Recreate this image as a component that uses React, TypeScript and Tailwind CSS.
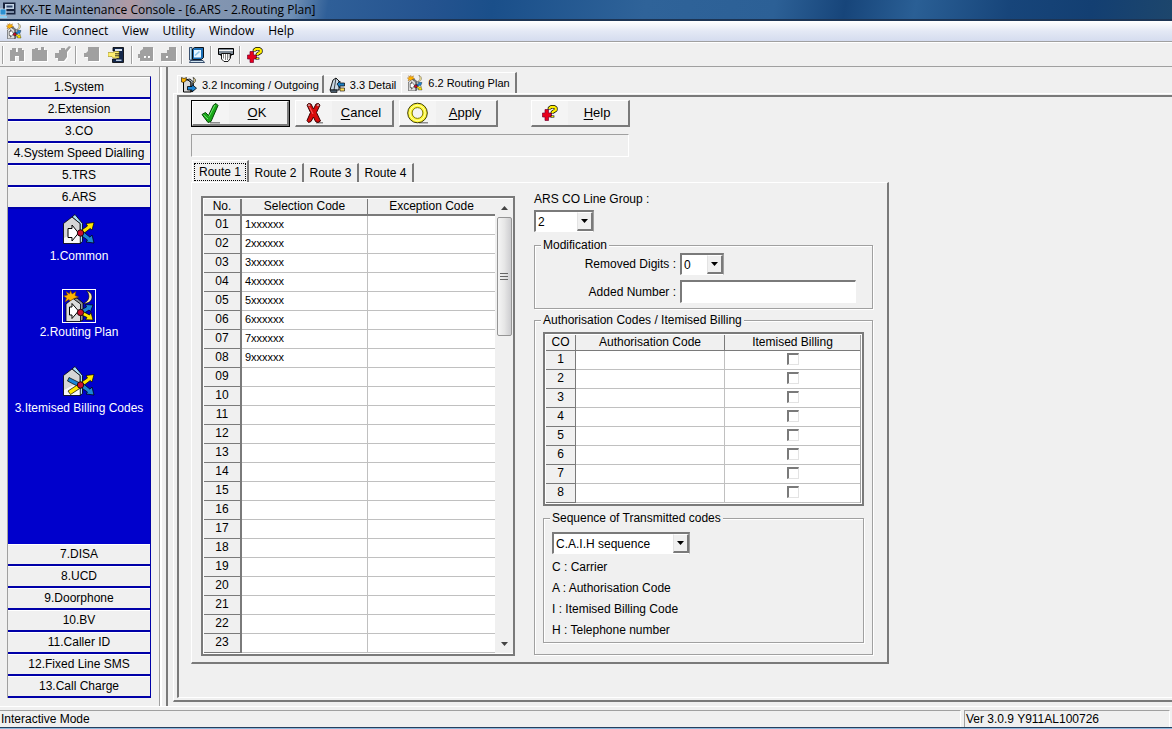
import type { ReactNode } from "react";

const topSections = ["1.System", "2.Extension", "3.CO", "4.System Speed Dialling", "5.TRS", "6.ARS"];

const bottomSections = [
  "7.DISA",
  "8.UCD",
  "9.Doorphone",
  "10.BV",
  "11.Caller ID",
  "12.Fixed Line SMS",
  "13.Call Charge",
];

const menus = ["File", "Connect", "View", "Utility", "Window", "Help"];

const routes = ["Route 1", "Route 2", "Route 3", "Route 4"];

const selectionCodes = [
  "1xxxxxx",
  "2xxxxxx",
  "3xxxxxx",
  "4xxxxxx",
  "5xxxxxx",
  "6xxxxxx",
  "7xxxxxx",
  "9xxxxxx",
];

const rowNumbers = Array.from({ length: 23 }, (_, i) => String(i + 1).padStart(2, "0"));

const coLines = [1, 2, 3, 4, 5, 6, 7, 8];

/* ---------- icons ---------- */

function HouseFront() {
  return (
    <>
      <path d="M9 3 L12 0.5 L19.5 9.5 V27.5 L17 29.5 V9.5 Z" fill="#a8dcf4" stroke="#000" strokeWidth="0.8" />
      <path d="M0.5 9.5 L9 3 L17 9.5 V29.5 H0.5 Z" fill="#d6d6d6" stroke="#000" strokeWidth="0.8" />
      <path d="M1 24 L16.6 16 V29 H1 Z" fill="#f8f8f8" />
    </>
  );
}

function WhiteArrow() {
  return <path d="M5 14.5 H9 V11 L15.5 19 L9 27 V23.5 H5 Z" fill="#fff" stroke="#000" />;
}

function SplitArrows({ up, down }: { up: string; down: string }) {
  return (
    <>
      <path d="M18 16.5 L24.5 12 L23 9.5 L31 8.5 L29 16 L27.2 14.5 L20 20 Z" fill={up} stroke="#000" strokeWidth="0.7" />
      <path d="M20 17.5 L27 23.2 L29 21 L31 29 L23 28 L24.5 26 L18 21.5 Z" fill={down} stroke="#000" strokeWidth="0.7" />
      <circle cx="17.5" cy="19" r="3.2" fill="#c8102e" stroke="#000" strokeWidth="0.8" />
    </>
  );
}

function CommonIcon() {
  return (
    <svg viewBox="0 0 32 32" className="size-8" aria-hidden="true">
      <HouseFront />
      <WhiteArrow />
      <SplitArrows up="#ffe800" down="#1c86d8" />
    </svg>
  );
}

function RoutingIcon({ className }: { className: string }) {
  return (
    <svg viewBox="0 0 32 32" className={className} aria-hidden="true">
      <path d="M10 9 L14 8 L20 13 V30 L17 31.5 V14 Z" fill="#8f9498" stroke="#000" strokeWidth="0.8" />
      <path d="M3 14 L10 8.5 L17.5 14 V31.5 H3 Z" fill="#dcdcdc" stroke="#000" strokeWidth="0.8" />
      <path d="M6.5 17 H9 V13.5 L15.5 21 L9 28.5 V25 H6.5 Z" fill="#fff" stroke="#000" />
      <path
        d="M7.5 0.5 L9.2 4 L13 1.5 L12 5.5 L15.5 7 L11 8.5 L7 11 L6 9.5 L2 12 L3.5 8 L0.5 6 L4.5 5 L3 1.5 L6.5 3.8 Z"
        fill="#ffb400"
        stroke="#7a3b00"
        strokeWidth="0.6"
      />
      <path d="M23.5 0.5 C31.5 3 31 13.5 20.5 13.5 C26.5 10.5 27.5 5.5 23.5 0.5 Z" fill="#ffeea0" stroke="#000" strokeWidth="0.6" />
      <path d="M18 20 L23.5 17 L22.5 14.5 L30 15 L27.5 21.5 L26 20 L20 24 Z" fill="#1c86d8" stroke="#000" strokeWidth="0.7" />
      <path d="M20 21.5 L26.5 25 L28 22.5 L30 30 L22.5 29.8 L24 27.5 L18 24.5 Z" fill="#ffe800" stroke="#000" strokeWidth="0.7" />
      <circle cx="17.5" cy="22.5" r="3.2" fill="#c8102e" stroke="#000" strokeWidth="0.8" />
    </svg>
  );
}

function ItemisedIcon() {
  return (
    <svg viewBox="0 0 32 32" className="size-8" aria-hidden="true">
      <HouseFront />
      <path d="M6 11.5 L18 17.5 L16 21 L4.5 15 Z" fill="#1c86d8" stroke="#000" strokeWidth="0.7" />
      <path d="M7.5 28.5 L19 21 L16.5 17.5 L5 25 Z" fill="#ffe800" stroke="#000" strokeWidth="0.7" />
      <SplitArrows up="#ffe800" down="#1c86d8" />
    </svg>
  );
}

function ConsoleIcon() {
  return (
    <svg viewBox="0 0 16 16" className="size-4" aria-hidden="true">
      <path d="M3 0.5 H15.5 V12.5 H3 Z" fill="#16223c" />
      <path d="M5 2 H14 V7 H5 Z" fill="#c4d4e6" />
      <path d="M6.5 3.5 H12.5 V5.5 H6.5 Z" fill="#33486c" />
      <path d="M6 9 H14 V11 H6 Z" fill="#7d8ea8" />
      <path d="M0 7 H6 V13 H0 Z" fill="#2b8fd0" stroke="#fff" strokeWidth="0.6" />
      <path d="M0 14 H7 V16 H0 Z" fill="#8ed0f4" />
    </svg>
  );
}

function DoorIcon() {
  return (
    <svg viewBox="0 0 16 16" className="size-4" aria-hidden="true">
      <path d="M2.5 5 L6 2.5 L10 5 V15 H2.5 Z" fill="#d8d8d8" stroke="#000" />
      <path d="M6 2.5 L9 2 L12.5 5 V13.5 L10 15 V5 Z" fill="#a4b4be" stroke="#000" strokeWidth="0.8" />
      <path d="M0.5 0.5 L3 1.5 L5.5 0.5 L5 3.5 L3 5.5 L0.5 5 Z" fill="#ffb400" stroke="#000" strokeWidth="0.6" />
      <path d="M12 0.5 C15.5 1.5 15.5 6 11 6.5 C13 5 13.5 3 12 0.5 Z" fill="#ffeea0" stroke="#000" strokeWidth="0.6" />
      <path d="M6.5 9.5 H11 V7.5 L15.5 11.2 L11 15 V13 H6.5 Z" fill="#1c86d8" stroke="#000" strokeWidth="0.8" />
    </svg>
  );
}

function DetailIcon() {
  return (
    <svg viewBox="0 0 16 16" className="size-4" aria-hidden="true">
      <path d="M1 13 L4 3 L7 1 L10 4 V13 Z" fill="#c8d8e4" stroke="#000" strokeWidth="0.9" />
      <path d="M7 1 L5 13" stroke="#000" strokeWidth="0.7" />
      <path d="M8 7 L11 4 V6 H15.5 V9 H11 V11 Z" fill="#1c7fc4" stroke="#000" strokeWidth="0.7" />
      <path d="M11 11 H15.5 V14 H11 Z" fill="#ffdc58" stroke="#000" strokeWidth="0.6" />
      <path d="M1 13 H8 V15.5 H2 Z" fill="#4a5c6c" stroke="#000" strokeWidth="0.6" />
    </svg>
  );
}

function HelpIcon({ className }: { className: string }) {
  return (
    <svg viewBox="0 0 16 16" className={className} aria-hidden="true">
      <path d="M3 4.5 H6.5 V8 H9.5 V12 H6.5 V15.5 H3 V12 H0.5 V8 H3 Z" fill="#e8001c" stroke="#7a0030" strokeWidth="0.7" />
      <g fill="none" strokeLinejoin="round">
        <path d="M7.5 4.5 V3.2 L9.2 1.8 H12.2 L13.8 3.2 V5 L10.5 7.2 V8.5 M10.5 10.5 V12.5" stroke="#000" strokeWidth="3.6" />
        <path d="M7.5 4 V3.2 L9.2 1.8 H12.2 L13.8 3.2 V5 L10.5 7.2 V8 M10.5 11 V12" stroke="#ffee00" strokeWidth="2.2" />
      </g>
    </svg>
  );
}

function DisabledIcon({ d }: { d: string }) {
  return (
    <svg viewBox="0 0 17 17" className="size-[17px]" aria-hidden="true">
      <path d={d} fill="#fff" transform="translate(1 1)" />
      <path d={d} fill="#a0a0a0" />
    </svg>
  );
}

function DisconnectIcon() {
  return (
    <svg viewBox="0 0 16 16" className="size-4" aria-hidden="true">
      <path d="M5 0.5 H15.5 V15.5 H4.5 V12 H9 V4 H5 Z" fill="#14284c" stroke="#000" strokeWidth="0.8" />
      <path d="M7 2 H14 V4 H7 Z" fill="#dfe8f2" />
      <path d="M8 12.5 H13.5 V14 H8 Z" fill="#b8c8dc" />
      <path d="M0 5.5 H5 L7 4.5 H11 V11 H5 L4 9.5 H0 Z" fill="#ffef70" stroke="#8a7a00" strokeWidth="0.5" />
      <path d="M7 6.8 H11.5 M7 8.8 H11.5" stroke="#000" strokeWidth="0.8" />
    </svg>
  );
}

function TerminalIcon() {
  return (
    <svg viewBox="0 0 16 16" className="size-4" aria-hidden="true">
      <path d="M0.5 0.5 H3 V13 H0.5 Z" fill="#b8e0f4" stroke="#10284c" strokeWidth="0.8" />
      <path d="M3.5 2 L5.5 0.5 H14.5 V10.5 L12.5 12.5 H3.5 Z" fill="#1c70b8" stroke="#000" strokeWidth="0.9" />
      <path d="M5 3 H12 V10.5 H5 Z" fill="#e8f6ff" />
      <path d="M6 8.5 L10.5 4.5" stroke="#8cc4e8" strokeWidth="1.6" />
      <path d="M1.5 13.5 H14 L15.5 15.5 H0.5 Z" fill="#cfe4f0" stroke="#10284c" strokeWidth="0.8" />
    </svg>
  );
}

function PrinterIcon() {
  return (
    <svg viewBox="0 0 16 16" className="size-4" aria-hidden="true">
      <path d="M0.5 1.5 H15.5 V7.5 H13 V9 H3 V7.5 H0.5 Z" fill="#7c8894" stroke="#000" />
      <path d="M1 3.5 H15" stroke="#f4f4f4" />
      <path d="M3.5 6.5 H12.5 V11 L10 14.5 H6 L3.5 12 Z" fill="#fff" stroke="#000" strokeWidth="0.9" />
      <path d="M5.5 7 V11.5 M7.5 7 V13 M9.5 7 V13 M11.2 7 V11" stroke="#666" strokeWidth="0.8" />
    </svg>
  );
}

function CheckIcon() {
  return (
    <svg viewBox="0 0 20 22" className="h-[22px] w-5" aria-hidden="true">
      <path d="M9 20 H19 V21.5 H9 Z" fill="#8c8c8c" />
      <path d="M1 12.5 L4.5 10.5 L7.5 13.5 L12.5 3 L15 1.5 L17 3.5 L10 19.5 L7 20.5 Z" fill="#18a818" stroke="#044404" />
      <path d="M2.5 12.8 L7 17 M8 14.5 L14 3" stroke="#6fe86f" />
    </svg>
  );
}

function CrossIcon() {
  return (
    <svg viewBox="0 0 20 22" className="h-[22px] w-5" aria-hidden="true">
      <path d="M12 20 H19 V21.5 H12 Z" fill="#8c8c8c" />
      <path
        d="M3 3 L4.5 1.5 L7 2 L9.5 7 L12 2 L14.5 1.5 L16 3 L12.5 10.5 L16.5 19 L14 20.5 L11.5 19.5 L9.5 15 L7 19.5 L4.5 20.5 L3 18.5 L6.5 10.5 Z"
        fill="#d80c0c"
        stroke="#3c0000"
      />
      <path d="M3.5 3 L5 2 L6.5 3 L5 4.5 Z M12.5 3 L14.2 2 L15.5 3 L14 4.5 Z" fill="#c8a8a8" />
      <path d="M5.5 5 L9 12" stroke="#ff6464" />
    </svg>
  );
}

function RingIcon() {
  return (
    <svg viewBox="0 0 22 22" className="size-[22px]" aria-hidden="true">
      <path d="M12 20 H21 V21.5 H12 Z" fill="#8c8c8c" />
      <circle cx="10.5" cy="11" r="9.8" fill="#fff833" stroke="#3a3800" />
      <circle cx="10.5" cy="11" r="7.6" fill="none" stroke="#ffffb0" />
      <circle cx="10.5" cy="11" r="5.4" fill="#f4f4f4" stroke="#7a7600" />
    </svg>
  );
}

/* ---------- controls ---------- */

function ActionButton({
  icon,
  accessKey,
  rest,
  primary = false,
}: {
  icon: ReactNode;
  accessKey: string;
  rest: string;
  primary?: boolean;
}) {
  return (
    <button
      type="button"
      className={
        primary
          ? "h-[27px] w-[99px] border border-black bg-[#f0f0f0]"
          : "h-[27px] w-[99px] bg-[#f0f0f0]"
      }
    >
      <span className="flex h-full items-center border-t border-r-2 border-b-2 border-l border-t-white border-r-[#7a7a7a] border-b-[#7a7a7a] border-l-white">
        <span className="flex h-full w-9 items-center justify-center bg-[#f4f4f4]">{icon}</span>
        <span className="flex-1 pr-0.5 text-center text-[13px]">
          <span className="underline underline-offset-2">{accessKey}</span>
          {rest}
        </span>
      </span>
    </button>
  );
}

function ComboBox({ id, value, width }: { id: string; value: string; width: string }) {
  return (
    <div
      className={`relative h-[22px] border-t-2 border-r border-b border-l-2 border-t-[#7a7a7a] border-r-[#a0a0a0] border-b-white border-l-[#7a7a7a] bg-white ${width}`}
    >
      <select id={id} defaultValue={value} className="h-full w-full appearance-none bg-white pl-0.5 outline-none">
        <option>{value}</option>
      </select>
      <span className="pointer-events-none absolute inset-y-0 right-0 flex w-4 items-center justify-center border-t border-r-2 border-b-2 border-l border-t-white border-r-[#7a7a7a] border-b-[#7a7a7a] border-l-[#e3e3e3] bg-[#f0f0f0]">
        <svg viewBox="0 0 7 4" className="h-1 w-[7px]" aria-hidden="true">
          <path d="M0 0 H7 L3.5 4 Z" fill="#000" />
        </svg>
      </span>
    </div>
  );
}

function GroupBox({ title, className, children }: { title: string; className: string; children: ReactNode }) {
  return (
    <fieldset
      className={`min-w-0 border border-[#a0a0a0] shadow-[1px_1px_0_#fff,inset_1px_1px_0_#fff] ${className}`}
    >
      <legend className="ml-1.5 bg-[#f0f0f0] px-0.5 leading-[14px]">{title}</legend>
      {children}
    </fieldset>
  );
}

function SidebarButton({ label }: { label: string }) {
  return (
    <button
      type="button"
      className="block h-[22px] w-full border-t border-b-2 border-t-white border-b-[#0000a8] bg-[#f0f0f0] text-center leading-[19px] whitespace-nowrap"
    >
      {label}
    </button>
  );
}

function SidebarItem({ label, selected = false, children }: { label: string; selected?: boolean; children: ReactNode }) {
  return (
    <button type="button" className="flex w-full flex-col items-center gap-0.5 text-white">
      <span
        className={
          selected
            ? "flex size-[34px] items-center justify-center border border-white"
            : "flex size-[34px] items-center justify-center"
        }
      >
        {children}
      </span>
      <span className="leading-[14px] whitespace-nowrap">{label}</span>
    </button>
  );
}

function Separator() {
  return <span className="h-[18px] w-0.5 border-l border-[#a0a0a0] bg-white" />;
}

function ToolButton({ label, disabled = false, children }: { label: string; disabled?: boolean; children: ReactNode }) {
  return (
    <button type="button" aria-label={label} disabled={disabled} className="flex w-[23px] items-center justify-center">
      {children}
    </button>
  );
}

/* ---------- window parts ---------- */

function TitleBar() {
  return (
    <header className="flex h-[21px] items-center gap-1 border-b-2 border-[#1c3454] bg-[linear-gradient(100deg,#8fa3bd_0%,#8a9cb8_8%,#b09aa4_11%,#8798b2_14%,#7f93b0_21%,#6f8fb4_25%,#2f5f98_28%,#24538f_37%,#1a4f8a_42%,#2f6399_55%,#2c6096_66%,#17457a_72%,#2a5f95_78%,#17457a_86%,#133f72_93%,#1d466c_100%)]">
      <ConsoleIcon />
      <h1 className="font-['Open_Sans','Liberation_Sans',sans-serif] text-[12px]">
        KX-TE Maintenance Console - [6.ARS - 2.Routing Plan]
      </h1>
    </header>
  );
}

function MenuBar() {
  return (
    <nav className="flex h-[21px] items-center border-b border-[#a0a0a0] bg-linear-to-b from-white via-[#e4e9f5] to-[#d5dcef] pl-1.5 font-['Open_Sans','Liberation_Sans',sans-serif]">
      <RoutingIcon className="size-4" />
      <div className="flex gap-[14px] pl-[7px]">
        {menus.map((menu) => (
          <button key={menu} type="button">
            {menu}
          </button>
        ))}
      </div>
    </nav>
  );
}

function Toolbar() {
  return (
    <div className="flex h-[25px] items-center border-t border-b border-t-white border-b-[#a0a0a0] pl-0.5">
      <Separator />
      <div className="flex pl-0.5">
        <ToolButton label="New" disabled>
          <DisabledIcon d="M1 4 H3 V2 H7 V6 H9 V2 H13 V4 H15 V15 H10 V10 H6 V15 H1 Z" />
        </ToolButton>
        <ToolButton label="Open" disabled>
          <DisabledIcon d="M0 3 H3 V2 H6 V4 H9 V1 H12 V4 H15 V15 H0 Z" />
        </ToolButton>
        <ToolButton label="Save" disabled>
          <DisabledIcon d="M4 4 H6 V2 H10 V4 L14 0 L16 1 L12 6 V11 L9 15 H3 V12 H0 V7 H4 Z" />
        </ToolButton>
      </div>
      <Separator />
      <div className="flex pl-1">
        <ToolButton label="Connect" disabled>
          <DisabledIcon d="M0 7 H2 L4 5 V1 H15 V15 H4 V11 H0 Z" />
        </ToolButton>
        <ToolButton label="Disconnect">
          <DisconnectIcon />
        </ToolButton>
      </div>
      <span className="flex pl-1">
        <Separator />
      </span>
      <div className="flex pl-0.5">
        <ToolButton label="Upload" disabled>
          <DisabledIcon d="M0 8 H2 V5 L5 3 V1 H15 V15 H2 V12 H0 Z M6 10 V12 H8 V10 Z M10 10 V12 H12 V10 Z" />
        </ToolButton>
        <ToolButton label="Download" disabled>
          <DisabledIcon d="M0 7 H6 V4 H8 V1 H15 V15 H0 Z M5 10 V12 H7 V10 Z" />
        </ToolButton>
      </div>
      <Separator />
      <div className="flex px-0.5">
        <ToolButton label="Terminal">
          <TerminalIcon />
        </ToolButton>
      </div>
      <Separator />
      <div className="flex px-0.5">
        <ToolButton label="Print">
          <PrinterIcon />
        </ToolButton>
      </div>
      <Separator />
      <div className="flex px-0.5">
        <ToolButton label="Help">
          <HelpIcon className="size-4" />
        </ToolButton>
      </div>
    </div>
  );
}

function Sidebar() {
  return (
    <aside className="flex border-r-2 border-[#7a7a7a] pr-1.5">
      <div className="flex border-r border-[#a0a0a0] pt-[9px] pr-2 pb-2 pl-[7px] shadow-[2px_0_0_#fff]">
        <nav className="flex w-36 flex-col border-t border-r border-l border-t-[#a0a0a0] border-r-[#0000a8] border-l-[#a0a0a0]">
          {topSections.map((label) => (
            <SidebarButton key={label} label={label} />
          ))}
          <div className="flex flex-1 flex-col gap-[26px] bg-[#0000cc] pt-1">
            <SidebarItem label="1.Common">
              <CommonIcon />
            </SidebarItem>
            <SidebarItem label="2.Routing Plan" selected>
              <RoutingIcon className="size-8" />
            </SidebarItem>
            <SidebarItem label="3.Itemised Billing Codes">
              <ItemisedIcon />
            </SidebarItem>
          </div>
          {bottomSections.map((label) => (
            <SidebarButton key={label} label={label} />
          ))}
        </nav>
      </div>
    </aside>
  );
}

function WindowTabs() {
  return (
    <div role="tablist" className="flex items-end pl-1 text-[11px]">
      <button
        type="button"
        role="tab"
        className="flex h-[18px] items-center gap-[5px] border-t border-r-2 border-l border-t-white border-r-[#7a7a7a] border-l-white px-[3px]"
      >
        <DoorIcon />
        3.2 Incoming / Outgoing
      </button>
      <button type="button" role="tab" className="flex h-[18px] items-center gap-[5px] border-t border-white px-[5px]">
        <DetailIcon />
        3.3 Detail
      </button>
      <button
        type="button"
        role="tab"
        aria-selected="true"
        className="flex h-[21px] items-center gap-[5px] border-t border-r-2 border-l border-t-white border-r-[#7a7a7a] border-l-white px-[5px]"
      >
        <RoutingIcon className="size-4" />
        6.2 Routing Plan
      </button>
    </div>
  );
}

function CodeTable() {
  return (
    <div className="mt-1 flex border-2 border-[#7a7a7a] bg-white pt-px pb-px pl-px">
      <table className="table-fixed border-separate border-spacing-0 self-start">
        <thead>
          <tr className="bg-[#f0f0f0] leading-[15px]">
            <th className="w-[38px] border-r-2 border-b-2 border-[#7a7a7a] font-normal">No.</th>
            <th className="w-[126px] border-r border-b-2 border-[#7a7a7a] font-normal">Selection Code</th>
            <th className="w-[127px] border-b-2 border-[#7a7a7a] font-normal">Exception Code</th>
          </tr>
        </thead>
        <tbody>
          {rowNumbers.map((no, i) => (
            <tr key={no} className="h-[19px] align-top leading-[17px]">
              <th className="border-r-2 border-b border-[#7a7a7a] bg-[#f0f0f0] font-normal">{no}</th>
              <td className="border-r border-b border-[#c0c0c0] pl-[3px] text-[11px]">{selectionCodes[i]}</td>
              <td className="border-b border-[#c0c0c0]" />
            </tr>
          ))}
        </tbody>
      </table>
      <div className="flex w-[18px] flex-col items-center justify-between bg-[#f0f0f0]">
        <div className="flex flex-col items-center">
          <button type="button" aria-label="Scroll up" className="flex h-[18px] w-4 items-center justify-center">
            <svg viewBox="0 0 7 4" className="h-1 w-[7px]" aria-hidden="true">
              <path d="M0 4 H7 L3.5 0 Z" fill="#444" />
            </svg>
          </button>
          <div className="flex h-[119px] w-[15px] flex-col items-center justify-center gap-0.5 rounded-xs border border-[#959595] bg-linear-to-r from-[#f5f5f5] via-[#e6e6e6] to-[#cdcdd0]">
            <span className="h-px w-2 bg-[#666]" />
            <span className="h-px w-2 bg-[#666]" />
            <span className="h-px w-2 bg-[#666]" />
          </div>
        </div>
        <button type="button" aria-label="Scroll down" className="flex h-[18px] w-4 items-center justify-center">
          <svg viewBox="0 0 7 4" className="h-1 w-[7px]" aria-hidden="true">
            <path d="M0 0 H7 L3.5 4 Z" fill="#444" />
          </svg>
        </button>
      </div>
    </div>
  );
}

function BillingTable() {
  return (
    <div className="border-2 border-[#7a7a7a] bg-white p-px">
      <table className="w-full table-fixed border-separate border-spacing-0 border-r border-[#a0a0a0]">
        <thead>
          <tr className="bg-[#f0f0f0] leading-[15px]">
            <th className="w-[30px] border-r border-b border-[#7a7a7a] font-normal">CO</th>
            <th className="w-[149px] border-r border-b border-[#7a7a7a] font-normal">Authorisation Code</th>
            <th className="border-b border-[#7a7a7a] font-normal">Itemised Billing</th>
          </tr>
        </thead>
        <tbody>
          {coLines.map((line) => (
            <tr key={line} className="h-[19px] align-top leading-[17px]">
              <th className="border-r border-b border-[#7a7a7a] bg-[#f0f0f0] font-normal">{line}</th>
              <td className="border-r border-b border-[#c0c0c0]" />
              <td className="border-b border-[#c0c0c0] pt-0.5">
                <input
                  type="checkbox"
                  aria-label={`Itemised Billing ${line}`}
                  className="mx-auto block size-3 appearance-none border-t-2 border-r border-b border-l-2 border-t-[#7a7a7a] border-r-[#e3e3e3] border-b-[#e3e3e3] border-l-[#7a7a7a]"
                />
              </td>
            </tr>
          ))}
        </tbody>
      </table>
    </div>
  );
}

function RouteSettings() {
  return (
    <div className="flex w-[339px] flex-col">
      <label htmlFor="line-group" className="leading-[14px]">
        ARS CO Line Group :
      </label>
      <div className="pt-1">
        <ComboBox id="line-group" value="2" width="w-[60px]" />
      </div>

      <GroupBox title="Modification" className="mt-1.5 pb-[5px]">
        <div className="grid grid-cols-[141px_1fr] items-center gap-x-1 gap-y-[5px] pt-px">
          <label htmlFor="removed-digits" className="text-right">
            Removed Digits :
          </label>
          <ComboBox id="removed-digits" value="0" width="w-11" />
          <label htmlFor="added-number" className="text-right">
            Added Number :
          </label>
          <input
            id="added-number"
            type="text"
            className="h-[23px] w-44 border-t-2 border-r border-b border-l-2 border-t-[#7a7a7a] border-r-white border-b-white border-l-[#7a7a7a] bg-white px-1 outline-none"
          />
        </div>
      </GroupBox>

      <GroupBox title="Authorisation Codes / Itemised Billing" className="mt-1">
        <div className="px-2 pt-[5px] pb-[11px]">
          <BillingTable />
          <GroupBox title="Sequence of Transmitted codes" className="mt-[5px]">
            <div className="px-2 pt-[7px] pb-[5px]">
              <ComboBox id="sequence" value="C.A.I.H sequence" width="w-[138px]" />
              <label htmlFor="sequence" className="flex flex-col gap-[7px] pt-1.5 leading-[14px]">
                <span>C : Carrier</span>
                <span>A : Authorisation Code</span>
                <span>I : Itemised Billing Code</span>
                <span>H : Telephone number</span>
              </label>
            </div>
          </GroupBox>
        </div>
      </GroupBox>
    </div>
  );
}

function RoutingPlan() {
  return (
    <main className="flex min-w-0 flex-1 flex-col pt-[5px] pb-1 pl-[5px]">
      <WindowTabs />
      <div className="flex flex-1 flex-col border-t border-b-2 border-l border-t-white border-b-[#7a7a7a] border-l-white pt-px pb-0.5 pl-[3px]">
        <div className="flex-1 border-t-2 border-b border-l-2 border-t-[#7a7a7a] border-b-white border-l-[#7a7a7a] pt-[3px] pl-3">
          <div className="flex w-fit flex-col">
            <div className="flex">
              <div className="flex gap-[5px]">
                <ActionButton icon={<CheckIcon />} accessKey="O" rest="K" primary />
                <ActionButton icon={<CrossIcon />} accessKey="C" rest="ancel" />
                <ActionButton icon={<RingIcon />} accessKey="A" rest="pply" />
              </div>
              <div className="pl-[33px]">
                <ActionButton icon={<HelpIcon className="size-4" />} accessKey="H" rest="elp" />
              </div>
            </div>
            <div className="mt-[7px] h-[23px] w-[438px] border border-t-[#a0a0a0] border-r-white border-b-white border-l-[#a0a0a0]" />

            <div role="tablist" className="mt-[3px] flex items-end pl-px">
              {routes.map((route, i) => (
                <button
                  key={route}
                  type="button"
                  role="tab"
                  aria-selected={i === 0}
                  className={
                    i === 0
                      ? "h-[22px] w-[57px] border-t border-r-2 border-l border-t-white border-r-[#7a7a7a] border-l-white p-px"
                      : "h-[19px] w-[55px] border-t border-r-2 border-t-white border-r-[#7a7a7a]"
                  }
                >
                  {i === 0 ? <span className="block border border-dotted border-black leading-4">{route}</span> : route}
                </button>
              ))}
            </div>

            <div className="flex items-start gap-[19px] border-t border-r-2 border-b-2 border-l border-t-white border-r-[#7a7a7a] border-b-[#7a7a7a] border-l-white pt-[9px] pr-[14px] pb-1.5 pl-[9px]">
              <CodeTable />
              <RouteSettings />
            </div>
          </div>
        </div>
      </div>
    </main>
  );
}

function StatusBar() {
  return (
    <footer className="border-t border-white">
      <div className="flex gap-[3px] pt-[3px] pr-0.5">
        <div className="h-[17px] flex-1 border-t border-r border-t-[#a0a0a0] border-r-white pl-px leading-4">
          Interactive Mode
        </div>
        <div className="h-[17px] w-[206px] border-t border-r border-l border-t-[#a0a0a0] border-r-white border-l-[#a0a0a0] pl-px leading-4">
          Ver 3.0.9 Y911AL100726
        </div>
      </div>
      <div className="h-0.5 border-t border-[#26405e] bg-[#8fb8dc]" />
    </footer>
  );
}

export default function App() {
  return (
    <div className="flex min-h-screen flex-col bg-[#f0f0f0] font-['Liberation_Sans',Arial,sans-serif] text-[12px] leading-4 text-black">
      <TitleBar />
      <MenuBar />
      <Toolbar />
      <div className="flex flex-1">
        <Sidebar />
        <RoutingPlan />
      </div>
      <StatusBar />
    </div>
  );
}
